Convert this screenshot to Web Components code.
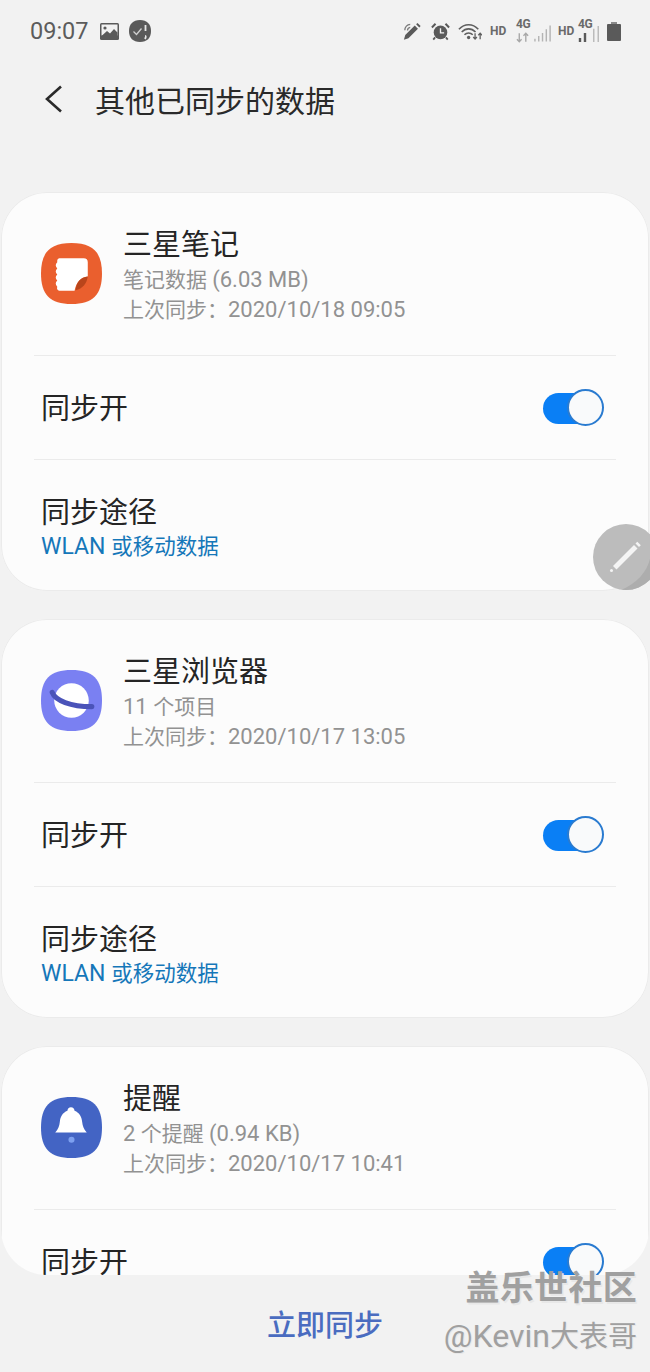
<!DOCTYPE html>
<html lang="zh-CN">
<head>
<meta charset="utf-8">
<title>其他已同步的数据</title>
<style>
html,body{margin:0;padding:0;background:#f2f2f2}
body{width:650px;height:1372px;overflow:hidden;font-family:Roboto,"Noto Sans CJK SC",sans-serif;color:#252525}
</style>
</head>
<body>
<x-app>
  <x-status-bar slot="status"></x-status-bar>
  <x-app-header slot="header" text="其他已同步的数据"></x-app-header>

  <x-sync-card name="三星笔记" detail="笔记数据 (6.03 MB)" last="上次同步：2020/10/18 09:05">
    <x-app-icon slot="icon" kind="notes"></x-app-icon>
  </x-sync-card>
  <x-sync-card name="三星浏览器" detail="11 个项目" last="上次同步：2020/10/17 13:05">
    <x-app-icon slot="icon" kind="browser"></x-app-icon>
  </x-sync-card>
  <x-sync-card name="提醒" detail="2 个提醒 (0.94 KB)" last="上次同步：2020/10/17 10:41" partial>
    <x-app-icon slot="icon" kind="reminder"></x-app-icon>
  </x-sync-card>

  <x-footer-action slot="footer" text="立即同步"></x-footer-action>
  <x-fab slot="overlay"></x-fab>
  <x-watermark slot="overlay"></x-watermark>
</x-app>

<script>
function def(name, css, html){
  customElements.define(name, class extends HTMLElement{
    connectedCallback(){
      if(this.shadowRoot) return;
      const r=this.attachShadow({mode:'open'});
      const a=n=>this.getAttribute(n)||'';
      r.innerHTML='<style>'+css+'</style>'+(typeof html==='function'?html(a,this):html);
    }
  });
}
const lat=s=>s.replace(/[\x21-\x7e][\x20-\x7e]*/g,m=>'<span class="lat">'+m+'</span>');

def('x-app',`
:host{display:flex;flex-direction:column;position:relative;width:650px;height:1372px;overflow:hidden;background:#f2f2f2}
.main{flex:1;min-height:0;overflow:hidden;margin:0 1px;border-radius:0 0 46px 46px;display:flex;flex-direction:column;gap:28px}
.gap{height:52px;flex:none}
`,`
<slot name="status"></slot><slot name="header"></slot><div class="gap"></div>
<div class="main"><slot></slot></div>
<slot name="footer"></slot><slot name="overlay"></slot>
`);

def('x-status-bar',`
:host{display:flex;align-items:center;height:60px;flex:none;padding:2px 29px 0 30px;box-sizing:border-box;color:#595959}
.t{font:400 23.5px/28px Roboto,sans-serif;color:#5c5c5c}
svg{display:block;flex:none}
.l{display:flex;align-items:center}
.r{margin-left:auto;display:flex;align-items:center}
.hd{width:16px;font:700 12px/14px Roboto,sans-serif;color:#6a6a6a;white-space:nowrap;flex:none}
.g{position:relative;width:14px;height:24px;flex:none;color:#6a6a6a}
.g b{position:absolute;left:0;top:-1px;font:700 12px/13px Roboto,sans-serif;letter-spacing:-.3px}
`,`
<div class="l">
  <span class="t">09:07</span>
  <svg style="margin-left:11px" width="19" height="17" viewBox="0 0 19 17"><rect width="19" height="17" rx="1.5" fill="#5a5a5a"/><rect x="1.5" y="1.5" width="16" height="11" fill="#f2f2f2"/><circle cx="5" cy="5" r="1.6" fill="#5a5a5a"/><path d="M1.5 13 7 8l3 2.5L14 6l3.5 3.5V13z" fill="#5a5a5a"/></svg>
  <svg style="margin-left:10px" width="22" height="22" viewBox="0 0 22 22"><path d="M11 0C18 0 22 4 22 11S18 22 11 22 0 18 0 11 4 0 11 0Z" fill="#5a5a5a"/><path d="M4.5 11.5l3 3 5-6" fill="none" stroke="#cfcfcf" stroke-width="1.3"/><path d="M16.5 5v6M16 16c1 0 1 1 0 3" fill="none" stroke="#e8e8e8" stroke-width="1.8"/></svg>
</div>
<div class="r">
  <svg width="19" height="19" viewBox="0 0 21 20"><path d="M1 19l1.500-5L13 3.500l3.500 3.500L6 17.500z" fill="#5a5a5a"/><path d="M14.500 2l1.500-1.500 3.500 3.500L18 5.500z" fill="#5a5a5a"/><path d="M2 8.500A6.500 6.500 0 0 1 8 2M5 9a3.500 3.500 0 0 1 3-3.500" fill="none" stroke="#7a7a7a" stroke-width="1.400"/></svg>
  <svg style="margin-left:9px" width="19" height="19" viewBox="0 0 21 20"><circle cx="10.500" cy="11" r="7.500" fill="#5a5a5a"/><path d="M10.500 6.500V11.500H14.500" fill="none" stroke="#f2f2f2" stroke-width="1.500"/><path d="M1 5.500 5 1.500M20 5.500 16 1.500" stroke="#5a5a5a" stroke-width="2.200"/><path d="M4.500 16.500 2.500 19M16.500 16.500 18.500 19" stroke="#5a5a5a" stroke-width="2"/></svg>
  <svg style="margin-left:8px" width="24" height="19" viewBox="0 0 26 20"><path d="M1 7.500C7 1 16 1 22 7.500M4 10.500C8.500 6 14.500 6 19 10.500M7 13.500C9.500 11 13.500 11 16 13.500" fill="none" stroke="#5f5f5f" stroke-width="1.700"/><circle cx="11.500" cy="16.500" r="1.800" fill="#5f5f5f"/><path d="M18.500 12v6M16.500 16l2 2.200 2-2.200M24 18.500v-6.500M22 14l2-2.200 2 2.200" fill="none" stroke="#5f5f5f" stroke-width="1.400"/></svg>
  <span class="hd" style="margin-left:8px">HD</span>
  <span class="g" style="margin-left:10px"><b>4G</b><svg style="position:absolute;left:0;top:13px" width="14" height="11" viewBox="0 0 15 11"><path d="M3.500 1v9M1 7.500l2.500 2.500 2.500-2.500M10.500 10V1M8 3.500 10.500 1 13 3.500" fill="none" stroke="#a8a8a8" stroke-width="1.500"/></svg></span>
  <svg style="margin-left:4px;margin-top:5px" width="18" height="18" viewBox="0 0 19 18"><path d="M1 17v-3M5 17v-6M9 17V8M13 17V4M17 17V0" stroke="#b4b4b4" stroke-width="1.500"/></svg>
  <span class="hd" style="margin-left:6px">HD</span>
  <span class="g" style="margin-left:4px"><b>4G</b><svg style="position:absolute;left:0;top:13px" width="10" height="10" viewBox="0 0 10 10"><path d="M2 10V6M7 10V1" stroke="#5a5a5a" stroke-width="2.400"/></svg></span>
  <svg style="margin-top:5px" width="8" height="18" viewBox="0 0 9 18"><path d="M2 18V3M7 18V0" stroke="#b4b4b4" stroke-width="1.500"/></svg>
  <svg style="margin-left:7px" width="14" height="19" viewBox="0 0 14 19"><rect x="4" width="6" height="3" fill="#8a8a8a"/><rect y="2" width="14" height="17" rx="1" fill="#5a5a5a"/></svg>
</div>
`);

def('x-app-header',`
:host{display:flex;align-items:center;height:80px;flex:none;box-sizing:border-box;padding:0 0 3px 44px}
svg{display:block;flex:none}
span{margin-left:32px;font:400 30px/40px "Noto Sans CJK SC",sans-serif;color:#2a2a2a;white-space:nowrap}
`,a=>`
<svg width="19" height="28" viewBox="0 0 19 28"><path d="M17 1.500 3 14 17 26.500" fill="none" stroke="#2a2a2a" stroke-width="2.600"/></svg>
<span>${a('text')}</span>
`);

def('x-toggle',`
:host{display:block;position:relative;width:61px;height:38px;flex:none}
.track{position:absolute;left:0;top:4px;width:50px;height:31px;border-radius:16px;background:#0a7ff5}
.thumb{position:absolute;right:0;top:0;width:37px;height:37px;box-sizing:border-box;border-radius:50%;background:#f9fafb;border:2px solid #2a7bd0}
`,`<div class="track"></div><div class="thumb"></div>`);

def('x-sync-card',`
:host{display:block;flex:none;height:399px;box-sizing:border-box;border-radius:46px;background:#fcfcfc;box-shadow:inset 0 0 0 1px #ebebeb;font-family:Roboto,"Noto Sans CJK SC",sans-serif}
.head{height:163px;box-sizing:border-box;padding:36px 40px 31px 40px;display:flex;align-items:center;gap:21px}
::slotted([slot=icon]){margin-top:-5px}
.name{font-size:29px;line-height:36px;color:#252525;white-space:nowrap;margin-bottom:2px}
.sub{font-size:21px;line-height:30px;color:#929292;white-space:nowrap}
.sub .lat{font-size:22px}
hr{border:0;height:1px;background:#ebebeb;margin:0 33px}
.row{height:103px;box-sizing:border-box;padding:0 45px 0 40px;display:flex;align-items:center;justify-content:space-between}
.label{font-size:29px;line-height:36px;color:#252525;white-space:nowrap}
.row .label{padding-top:2px}
.path{padding:35px 40px 0}
.link{font-size:21.500px;line-height:32px;color:#1577b9;white-space:nowrap}
.link .lat{font-size:23px}
`,(a,el)=>`
<div class="head">
  <slot name="icon"></slot>
  <div>
    <div class="name">${a('name')}</div>
    <div class="sub">${lat(a('detail'))}</div>
    <div class="sub">${lat(a('last'))}</div>
  </div>
</div>
<hr>
<div class="row"><span class="label">同步开</span><x-toggle></x-toggle></div>
${el.hasAttribute('partial')?'':`<hr>
<div class="path"><div class="label">同步途径</div><div class="link">${lat('WLAN 或移动数据')}</div></div>`}
`);

const SQ='M30 0C51 0 60 9 60 30S51 60 30 60 0 51 0 30 9 0 30 0Z';
const ICONS={
 notes:`<path d="${SQ}" fill="#ea5f2e"/>
  <path d="M18 15H42a4 4 0 0 1 4 4V33C39 34 35 38 33 47H18Q15 46 16 43Q13 40 16 37Q13 34 16 31Q13 28 16 25Q13 22 16 19Q15.500 15.500 18 15Z" fill="#fff"/>
  <path d="M46 33C39 34 35 38 34 46.500 41 45 45 40 46 33Z" fill="#b9451b"/>`,
 browser:`<path d="${SQ}" fill="#7a80f2"/>
  <circle cx="30" cy="30" r="17" fill="#fff"/>
  <path d="M11 22C14 30 29 36 50 36" fill="none" stroke="#4a53b9" stroke-width="5" stroke-linecap="round"/>`,
 reminder:`<path d="${SQ}" fill="#4364c4"/>
  <path d="M29.500 10c2 0 3.500 1.500 3.500 3.500 5 2 7 6 7.500 11 .5 4 1.500 7 4.500 10.500H14c3-3.500 4-6.500 4.500-10.500.5-5 2.500-9 7.500-11 0-2 1.500-3.500 3.500-3.500z" fill="#fff"/>
  <circle cx="30" cy="42" r="3" fill="#7da0f0"/>`
};
def('x-app-icon',`:host{display:block;width:61px;height:61px;flex:none}svg{display:block}`,
 a=>`<svg width="61" height="61" viewBox="0 0 60 60">${ICONS[a('kind')]}</svg>`);

def('x-footer-action',`
:host{display:flex;align-items:center;justify-content:center;height:97px;flex:none;box-sizing:border-box;padding-bottom:1px}
span{font:500 29px/40px "Noto Sans CJK SC",sans-serif;color:#4a6cc0}
`,a=>`<span>${a('text')}</span>`);

def('x-fab',`
:host{position:absolute;left:593px;top:524px;width:66px;height:66px;border-radius:50%;background:#bcbcbc;overflow:hidden;display:block}
svg{display:block}
`,`<svg width="66" height="66" viewBox="0 0 66 66"><path d="M58 28C57 44 47 58 28 66H66V28Z" fill="#adadad"/><path d="M41 21l3.500 3.500-21 21-3.500-3.500z" fill="#f4f4f4"/><path d="M42.500 19.500l1.800-1.800 3.500 3.500-1.800 1.800z" fill="#f4f4f4"/><circle cx="18.500" cy="46.500" r="1.500" fill="#f4f4f4"/></svg>`);

def('x-watermark',`
:host{position:absolute;right:13px;top:1264px;display:block;text-align:right;font-family:"Noto Sans CJK SC",sans-serif;white-space:nowrap;pointer-events:none}
.a{font-size:34px;line-height:44px;font-weight:700;color:#a0a0a0;text-shadow:1.500px 1.500px 0 #e8e8e8;letter-spacing:.3px}
.b{font-size:29px;line-height:38px;margin-top:7px;color:#a0a0a0;text-shadow:1px 1px 0 #e8e8e8}
.b span{font:400 32px/38px Roboto,sans-serif}
`,`<div class="a">盖乐世社区</div><div class="b"><span>@Kevin</span>大表哥</div>`);
</script>
</body>
</html>
